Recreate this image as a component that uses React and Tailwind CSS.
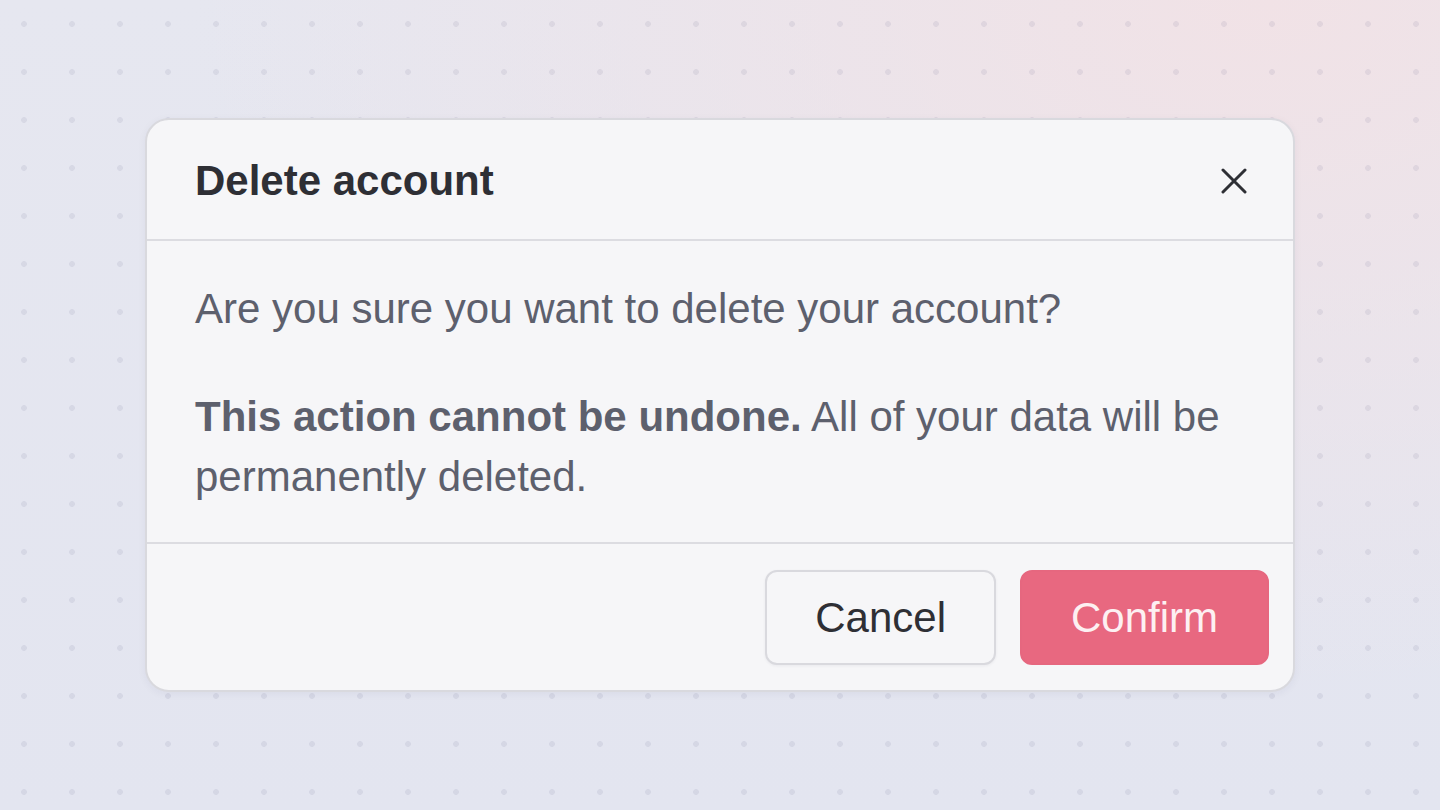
import { useState } from "react";

export default function App() {
  const [open, setOpen] = useState(true);

  return (
    <div
      className="w-full h-[810px] flex items-center justify-center font-['Liberation_Sans',Arial,sans-serif] bg-[radial-gradient(circle,rgba(40,40,90,0.075)_2.6px,transparent_3.2px),radial-gradient(ellipse_at_88%_0%,#f1e2e6_0%,rgba(241,226,230,0)_60%),linear-gradient(180deg,#e6e7f0,#e3e5f0)] bg-[size:48px_48px,100%_100%,100%_100%]"
    >
      {open && (
        <div className="w-[1150px] rounded-3xl border-2 border-[#d9d9de] bg-[#f6f6f8] shadow-[0_2px_8px_rgba(40,40,70,0.05)] overflow-hidden">
          <div className="h-[121px] flex items-center justify-between px-12 pt-[2px] border-b-2 border-[#dcdce1]">
            <h2 className="text-[42px] font-bold text-[#2e2f35] leading-none">Delete account</h2>
            <button onClick={() => setOpen(false)} className="w-[26px] h-[26px] flex items-center justify-center text-[#2e2f35] -mr-[2px]">
              <svg width="26" height="26" viewBox="0 0 26 26" fill="none" stroke="currentColor" strokeWidth="3" strokeLinecap="round">
                <path d="M2 2L24 24M24 2L2 24" />
              </svg>
            </button>
          </div>

          <div className="px-12 pt-[38px] pb-[35px] text-[42px] leading-[60px] text-[#5d606d] flex flex-col gap-[48px]">
            <p>Are you sure you want to delete your account?</p>
            <p>
              <strong className="font-bold">This action cannot be undone.</strong> All of your data will be permanently deleted.
            </p>
          </div>

          <div className="flex justify-end gap-6 px-6 pt-[26px] pb-[25px] border-t-2 border-[#dcdce1]">
            <button className="h-[95px] px-[48px] rounded-xl border-2 border-[#d9d9de] bg-[#f6f6f8] text-[42px] text-[#2e2f35] shadow-[0_1px_3px_rgba(40,40,70,0.06)]">
              Cancel
            </button>
            <button className="h-[95px] px-[49px] rounded-xl border-2 border-[#e6677f] bg-[#e86880] text-[42px] text-[#fdf0f2]">
              Confirm
            </button>
          </div>
        </div>
      )}
    </div>
  );
}
